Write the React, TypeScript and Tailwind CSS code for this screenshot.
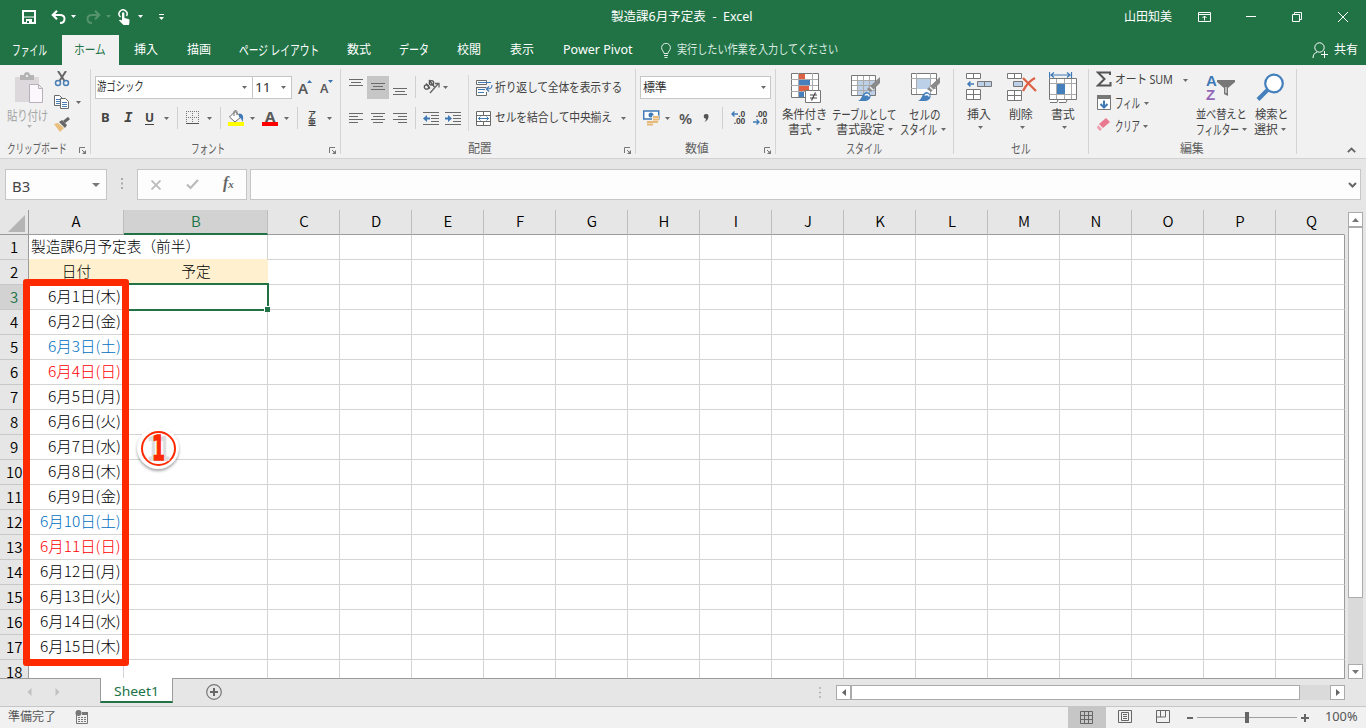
import React, { useLayoutEffect, useRef, useState } from "react";

interface FitProps {
  w: number;
  className?: string;
  children: React.ReactNode;
}

// Single line label squeezed to the narrow widths of the UI font
function Fit({ w, className = "", children }: FitProps) {
  const ref = useRef<HTMLSpanElement>(null);
  const [scale, setScale] = useState(1);

  useLayoutEffect(() => {
    if (ref.current) setScale(w / ref.current.offsetWidth);
  }, [w]);

  return (
    <span className={`block shrink-0 whitespace-nowrap ${className}`} style={{ width: w }}>
      <span ref={ref} className="inline-block origin-left" style={{ transform: `scaleX(${scale})` }}>
        {children}
      </span>
    </span>
  );
}

interface IconProps {
  w: number;
  h: number;
  className?: string;
  children: React.ReactNode;
}

function Icon({ w, h, className = "", children }: IconProps) {
  return (
    <svg width={w} height={h} viewBox={`0 0 ${w} ${h}`} fill="none" className={`block shrink-0 ${className}`}>
      {children}
    </svg>
  );
}

function Caret({ className = "text-[#6a6a6a]" }: { className?: string }) {
  return (
    <Icon w={5} h={3} className={className}>
      <path d="M0 0h5L2.5 3z" fill="currentColor" />
    </Icon>
  );
}

function Launcher({ className = "" }: { className?: string }) {
  return (
    <Icon w={8} h={8} className={className}>
      <path d="M.5 6V.5H6M3 3l3 3" stroke="#777" />
      <path d="M7 3v4H3z" fill="#777" />
    </Icon>
  );
}

function Lines({ rows, className = "" }: { rows: number[][]; className?: string }) {
  return (
    <Icon w={14} h={11} className={className}>
      {rows.map(([x, y, len]) => (
        <path key={y} d={`M${x} ${y + 0.5}h${len}`} stroke="#6a6a6a" />
      ))}
    </Icon>
  );
}

/* ---------- title bar + tabs ---------- */

function TitleBar() {
  return (
    <div className="flex h-[35px] items-center text-white text-[12px] pb-[2px]">
      <Icon w={14} h={14} className="ml-[22px]">
        <path d="M1 1h12v12H1z" stroke="#fff" strokeWidth="2" />
        <path d="M2 6.500h10v1H2zM4 9h6v4H4z" fill="#fff" />
        <path d="M5 11h2v2H5z" fill="#217346" />
      </Icon>
      <Icon w={15} h={14} className="ml-[15px]">
        <path d="M2 5h7c3 0 4.500 1.500 4.500 3.800S12 13 9 13" stroke="#fff" strokeWidth="2" />
        <path d="M6 .8L1.800 5 6 9.200" stroke="#fff" strokeWidth="2.200" />
      </Icon>
      <Caret className="ml-[5px] text-white" />
      <Icon w={15} h={14} className="ml-[10px]">
        <path d="M13 5H6C3 5 1.500 6.500 1.500 8.800S3 13 6 13" stroke="#55936f" strokeWidth="2" />
        <path d="M9 .8L13.200 5 9 9.200" stroke="#55936f" strokeWidth="2.200" />
      </Icon>
      <Caret className="ml-[5px] text-[#55936f]" />
      <Icon w={12} h={16} className="ml-[7px]">
        <path d="M2.500 8A4 4 0 1 1 8.500 7" stroke="#fff" strokeWidth="1.500" />
        <path d="M4 4.500a1.200 1.200 0 0 1 2.400 0V9l4 1c1 .3 1.300 1 1.100 2L11 16H5.500L1 11.500c.5-1 1.500-1 3 0z" fill="#fff" />
      </Icon>
      <Caret className="ml-[8px] text-white" />
      <Icon w={5} h={6} className="ml-[16px]">
        <path d="M0 .5h5" stroke="#fff" />
        <path d="M0 3h5L2.500 6z" fill="#fff" />
      </Icon>
      <Fit w={142} className="ml-[447px]"><span className="whitespace-pre">製造課6月予定表  -  Excel</span></Fit>
      <Fit w={48} className="ml-[371px]">山田知美</Fit>
      <Icon w={13} h={10} className="ml-[26px]">
        <path d="M.5.5h12v9H.5zM.5 2.500h12M6.500 8.500V4M4.500 6l2-2 2 2" stroke="#fff" />
      </Icon>
      <Icon w={10} h={2} className="ml-[35px]"><path d="M0 .5h10" stroke="#fff" /></Icon>
      <Icon w={10} h={10} className="ml-[36px]">
        <path d="M.5 2.500h7v7h-7zM2.500 2V.5h7v7H8" stroke="#fff" />
      </Icon>
      <Icon w={10} h={10} className="ml-[36px]"><path d="M0 0l10 10M10 0L0 10" stroke="#fff" /></Icon>
    </div>
  );
}

function TabBar() {
  return (
    <div className="flex h-[30px] items-center text-white text-[12px]">
      <Fit w={35} className="ml-[12px] text-[13.500px]">ファイル</Fit>
      <div className="ml-[15px] flex h-[30px] w-[57px] shrink-0 items-center bg-[#f1f1f1] pl-[12px] text-[#217346]">
        <Fit w={32} className="text-[13px]">ホーム</Fit>
      </div>
      <Fit w={24} className="ml-[15px]">挿入</Fit>
      <Fit w={24} className="ml-[29px]">描画</Fit>
      <Fit w={80} className="ml-[28px] text-[13.500px]">ページ レイアウト</Fit>
      <Fit w={24} className="ml-[28px]">数式</Fit>
      <Fit w={30} className="ml-[28px] text-[13px]">データ</Fit>
      <Fit w={24} className="ml-[28px]">校閲</Fit>
      <Fit w={24} className="ml-[29px]">表示</Fit>
      <Fit w={70} className="ml-[29px]">Power Pivot</Fit>
      <Icon w={10} h={15} className="ml-[28px]">
        <path d="M3 10.500c0-2-2.400-3-2.400-5.800a4.400 4.400 0 0 1 8.800 0c0 2.800-2.400 3.800-2.400 5.800zM3 12.500h4M3.500 14.500h3" stroke="#e3efe8" />
      </Icon>
      <Fit w={161} className="ml-[6px] text-[12.500px] text-[#dcebe2]">実行したい作業を入力してください</Fit>
      <Icon w={16} h={16} className="ml-[474px]">
        <circle cx="7.500" cy="5.500" r="4.700" stroke="#fff" />
        <path d="M1 16c0-3 1.500-5 4-6M9 12.500h7M12.500 9v7" stroke="#fff" />
      </Icon>
      <Fit w={24} className="ml-[6px]">共有</Fit>
    </div>
  );
}

/* ---------- ribbon ---------- */

function GroupLabel({ ml, w, children }: { ml: string; w: number; children: React.ReactNode }) {
  return <Fit w={w} className={`${ml} text-[#5f5f5f]`}>{children}</Fit>;
}

function ClipboardGroup() {
  return (
    <div className="flex h-[85px] w-[91px] shrink-0 flex-col border-r border-[#d4d4d4] [&>*]:shrink-0">
      <div className="flex h-[70px]">
        <div className="flex w-[50px] flex-col pl-[7px] text-[#a6a6a6]">
          <Icon w={30} h={32} className="mt-[3px] ml-[7px]">
            <path d="M1 5h24v25H1z" fill="#dcd8dc" />
            <path d="M6 3h4c0-4 6-4 6 0h4v5H6z" fill="#b4b4b4" />
            <path d="M12 3h2v2h-2z" fill="#eee" />
            <path d="M15.500 12.500h9l4 4v14h-13zM24.500 12.500v4h4" fill="#fbf7fc" stroke="#b7b0b9" />
          </Icon>
          <Fit w={41} className="mt-[2px] leading-[18px] text-[13px]">貼り付け</Fit>
          <Caret className="mt-[1px] ml-[20px] text-[#b5b5b5]" />
        </div>
        <div className="flex flex-col pl-[4px] pt-[2px]">
          <Icon w={16} h={16}>
            <path d="M4 0l6.500 10M12 0L5.500 10" stroke="#666" strokeWidth="2" />
            <circle cx="4" cy="12" r="2.500" stroke="#4a7fb5" strokeWidth="1.500" />
            <circle cx="12" cy="12" r="2.500" stroke="#4a7fb5" strokeWidth="1.500" />
          </Icon>
          <div className="mt-[8px] flex items-center">
            <Icon w={16} h={14}>
              <path d="M.5.5h5l3 3v7h-8z" fill="#fff" stroke="#6a6a6a" />
              <path d="M2 4.500h4M2 6.500h4M2 8.500h4" stroke="#4a7fb5" />
              <path d="M6.500 3.500h5l3 3v7h-8z" fill="#fff" stroke="#6a6a6a" />
              <path d="M8 7.500h5M8 9.500h5M8 11.500h5" stroke="#4a7fb5" />
            </Icon>
            <Caret className="ml-[6px] text-[#6a6a6a]" />
          </div>
          <Icon w={17} h={15} className="mt-[8px]">
            <path d="M0 7l4-1 6 5-4 4z" fill="#e9bd7c" />
            <path d="M5 5l3-2 5 5-2 3z" fill="#666" />
            <path d="M10 5l5-4" stroke="#666" strokeWidth="3" />
          </Icon>
        </div>
      </div>
      <div className="flex h-[20px] items-center">
        <GroupLabel ml="ml-[7px]" w={60}><span className="text-[13px]">クリップボード</span></GroupLabel>
        <Launcher className="ml-[12px] mt-[3px]" />
      </div>
    </div>
  );
}

function Sep() {
  return <div className="h-[22px] w-px shrink-0 bg-[#d0d0d0]" />;
}

function FontGroup() {
  return (
    <div className="flex h-[85px] w-[250px] shrink-0 flex-col border-r border-[#d4d4d4] [&>*]:shrink-0">
      <div className="mt-[7px] flex h-[24px] pl-[4px]">
        <div className="flex h-[23px] w-[158px] items-center border border-[#c6c6c6] bg-white pl-[1px] text-[#333]">
          <Fit w={47} className="text-[12.500px]">游ゴシック</Fit>
          <Caret className="ml-[98px] text-[#6a6a6a]" />
        </div>
        <div className="-ml-px flex h-[23px] w-[40px] items-center border border-[#c6c6c6] bg-white pl-[2px] text-[#333]">
          <Fit w={15} className="text-[13px]">11</Fit>
          <Caret className="ml-[11px] text-[#6a6a6a]" />
        </div>
        <div className="ml-[6px] flex pt-[3px]">
          <span className="w-[9px] text-[15px] font-semibold leading-[18px] text-[#5a5a5a]">A</span>
          <Icon w={5} h={3} className="mt-[1px]"><path d="M0 3h5L2.500 0z" fill="#3a74b0" /></Icon>
          <span className="ml-[8px] w-[8px] text-[12.500px] font-semibold leading-[20px] text-[#5a5a5a]">A</span>
          <Icon w={5} h={3} className="mt-[1px]"><path d="M0 0h5L2.500 3z" fill="#3a74b0" /></Icon>
        </div>
      </div>
      <div className="mt-[7px] flex h-[22px] items-center">
        <Fit w={8} className="ml-[10px] text-[13px] font-bold text-[#444]">B</Fit>
        <span className="ml-[15px] w-[8px] font-['Liberation_Mono',monospace] text-[14px] font-bold italic text-[#444]">I</span>
        <span className="ml-[13px] w-[9px] border-b border-[#444] text-[12px] font-bold leading-[12px] text-[#444]">U</span>
        <Caret className="ml-[10px] text-[#6a6a6a]" />
        <div className="ml-[8px]"><Sep /></div>
        <Icon w={14} h={14} className="ml-[8px]">
          <path d="M.5 0v13M6.500 0v13M12.500 0v13M0 .5h13M0 6.500h13" stroke="#777" strokeDasharray="1 1" />
          <path d="M0 12.500h13" stroke="#555" />
        </Icon>
        <Caret className="ml-[7px] text-[#6a6a6a]" />
        <div className="ml-[8px]"><Sep /></div>
        <Icon w={17} h={16} className="ml-[7px]">
          <path d="M7 1.500l6 5.500-6 5-5.500-5z" fill="#fff" stroke="#6a6a6a" />
          <path d="M6 6V2c0-2 3-2 3 0v3" stroke="#6a6a6a" />
          <path d="M11 3.500c4 0 5 3 3.500 8.500-1-2-1-4-3.500-5z" fill="#3f79b6" />
          <path d="M0 12h16v4H0z" fill="#ff0" />
        </Icon>
        <Caret className="ml-[5px] text-[#6a6a6a]" />
        <div className="ml-[7px] flex w-[16px] flex-col items-center">
          <span className="h-[12px] text-[15px] font-bold leading-[13px] text-[#5a5a5a]">A</span>
          <div className="h-[4px] w-[16px] bg-[#f00]" />
        </div>
        <Caret className="ml-[6px] text-[#6a6a6a]" />
        <div className="ml-[8px]"><Sep /></div>
        <div className="ml-[10px] flex w-[9px] flex-col text-[8px] font-bold leading-[8px] text-[#444]">
          <span>ア</span>
          <span>亜</span>
        </div>
        <Caret className="ml-[10px] text-[#6a6a6a]" />
      </div>
      <div className="mt-[10px] flex h-[20px] items-center">
        <GroupLabel ml="ml-[100px]" w={34}><span className="text-[13px]">フォント</span></GroupLabel>
        <Launcher className="ml-[104px] mt-[3px]" />
      </div>
    </div>
  );
}

function AlignGroup() {
  return (
    <div className="flex h-[85px] w-[295px] shrink-0 flex-col border-r border-[#d4d4d4] [&>*]:shrink-0">
      <div className="flex h-[70px]">
        <div className="flex w-[127px] flex-col">
          <div className="mt-[7px] flex h-[23px] pl-[8px]">
            <Lines rows={[[0, 0, 14], [2, 3, 10], [0, 6, 14]]} className="mt-[3px]" />
            <div className="ml-[4px] h-[23px] w-[22px] bg-[#c6c6c6] pl-[4px] pt-[7px]">
              <Lines rows={[[0, 0, 14], [2, 3, 10], [0, 6, 14]]} />
            </div>
            <Lines rows={[[0, 0, 14], [2, 3, 10], [0, 6, 14]]} className="ml-[4px] mt-[12px]" />
            <div className="ml-[8px]"><Sep /></div>
            <Icon w={17} h={15} className="ml-[7px] mt-[3px]">
              <circle cx="3.500" cy="8" r="2.200" stroke="#555" strokeWidth="1.300" />
              <path d="M3 4.500l4 5M6 1l5.500 7" stroke="#555" strokeWidth="1.300" />
              <circle cx="8.500" cy="3.800" r="2.200" stroke="#555" strokeWidth="1.300" />
              <path d="M7 14l8-9M12 4.500h4v4" stroke="#666" strokeWidth="1.300" />
            </Icon>
            <Caret className="ml-[3px] mt-[10px] text-[#6a6a6a]" />
          </div>
          <div className="mt-[8px] flex h-[22px] items-center pl-[8px]">
            <Lines rows={[[0, 0, 14], [0, 3, 9], [0, 6, 14], [0, 9, 9]]} />
            <Lines rows={[[0, 0, 14], [2, 3, 10], [0, 6, 14], [2, 9, 10]]} className="ml-[8px]" />
            <Lines rows={[[0, 0, 14], [5, 3, 9], [0, 6, 14], [5, 9, 9]]} className="ml-[8px]" />
            <div className="ml-[8px]"><Sep /></div>
            <Icon w={16} h={13} className="ml-[7px]">
              <path d="M0 .5h16M8 3.500h8M8 6.500h8M8 9.500h8M0 12.500h16" stroke="#6a6a6a" />
              <path d="M0 6.500L4 3v2.500h3v2H4V10z" fill="#3f79b6" />
            </Icon>
            <Icon w={16} h={13} className="ml-[6px]">
              <path d="M0 .5h16M8 3.500h8M8 6.500h8M8 9.500h8M0 12.500h16" stroke="#6a6a6a" />
              <path d="M7 6.500L3 3v2.500H0v2h3V10z" fill="#3f79b6" />
            </Icon>
          </div>
        </div>
        <div className="mt-[6px] h-[56px] w-px bg-[#d8d8d8]" />
        <div className="flex flex-col pl-[7px] text-[#444]">
          <div className="mt-[7px] flex h-[24px] items-center">
            <Icon w={17} h={17}>
              <path d="M.5.5h10v4H.5zM.5 9V7.500h10M.5 7v8.500h10V12" fill="#fff" stroke="#6a6a6a" />
              <path d="M2 2.500h13M2 9.500h7M2 12.500h6M16 5c0 3-1 4-5 4M13 6.500L10.500 9l2.500 2.500" stroke="#3f79b6" strokeWidth="1.200" />
            </Icon>
            <Fit w={127} className="ml-[2px] text-[12.500px]">折り返して全体を表示する</Fit>
          </div>
          <div className="mt-[7px] flex h-[23px] items-center">
            <Icon w={16} h={16}>
              <path d="M.5.500h14v14H.5zM.5 4.500h14M.5 10.500h14M7.500 0v4M7.500 11v4" fill="#fff" stroke="#6a6a6a" />
              <path d="M2 7.500h11M4.500 5.500l-2 2 2 2M10.500 5.500l2 2-2 2" stroke="#3f79b6" />
            </Icon>
            <Fit w={117} className="ml-[3px] text-[12.500px]">セルを結合して中央揃え</Fit>
            <Caret className="ml-[9px] text-[#6a6a6a]" />
          </div>
        </div>
      </div>
      <div className="flex h-[20px] items-center">
        <GroupLabel ml="ml-[127px]" w={24}>配置</GroupLabel>
        <Launcher className="ml-[132px] mt-[3px]" />
      </div>
    </div>
  );
}

function NumberGroup() {
  return (
    <div className="flex h-[85px] w-[140px] shrink-0 flex-col border-r border-[#d4d4d4] [&>*]:shrink-0">
      <div className="mt-[7px] ml-[4px] flex h-[23px] w-[131px] items-center border border-[#c6c6c6] bg-white pl-[2px] text-[#333]">
        <Fit w={24}>標準</Fit>
        <Caret className="ml-[94px] text-[#6a6a6a]" />
      </div>
      <div className="mt-[8px] flex h-[22px] items-center pl-[7px] text-[#555]">
        <Icon w={17} h={16}>
          <path d="M.7 1h15v8h-15z" fill="#fff" stroke="#3f79b6" strokeWidth="1.500" />
          <circle cx="8" cy="5" r="2.500" fill="#3f79b6" />
          <path d="M9 5.500h7v5H9zM4 10.500h6v5H4z" fill="#f1f1f1" />
          <path d="M10 7h6M10 9.500h6M9 12h6M4 12h6M4 14.500h6" stroke="#e6ba78" strokeWidth="1.800" />
        </Icon>
        <Caret className="ml-[5px] text-[#6a6a6a]" />
        <Fit w={13} className="ml-[9px] text-[15px] font-semibold">%</Fit>
        <Icon w={6} h={8} className="ml-[11px]">
          <path d="M3 0a2.300 2.300 0 0 1 2.500 2.500C5.500 5 4 7 1.500 8 2.500 6.500 3 5.500 3 4.700A2.300 2.300 0 0 1 3 0z" fill="#555" />
        </Icon>
        <div className="ml-[13px]"><Sep /></div>
        <div className="ml-[7px] flex w-[15px] flex-col items-end font-['Liberation_Sans',sans-serif] text-[8.500px] font-bold leading-[7.500px] text-[#444]">
          <span className="flex items-center">
            <Icon w={7} h={6}><path d="M7 3H1M3.500.5L1 3l2.500 2.500" stroke="#3f79b6" strokeWidth="1.400" /></Icon>.0
          </span>
          <span>.00</span>
        </div>
        <div className="ml-[7px] flex w-[15px] flex-col items-end font-['Liberation_Sans',sans-serif] text-[8.500px] font-bold leading-[7.500px] text-[#444]">
          <span>.00</span>
          <span className="flex items-center">
            <Icon w={7} h={6}><path d="M0 3h6M3.500.5L6 3 3.500 5.500" stroke="#3f79b6" strokeWidth="1.400" /></Icon>.0
          </span>
        </div>
      </div>
      <div className="mt-[10px] flex h-[20px] items-center">
        <GroupLabel ml="ml-[49px]" w={24}>数値</GroupLabel>
        <Launcher className="ml-[55px] mt-[3px]" />
      </div>
    </div>
  );
}

function StyleBrush() {
  return (
    <>
      <path d="M29 4v6l-9 9-4-3z" fill="#8a8a8a" />
      <path d="M19 14l3 3" stroke="#f1f1f1" strokeWidth="1.500" />
      <path d="M7 28c4-1 4-9 9-9 5 1 5 8-1 9z" fill="#4580bd" />
      <path d="M14 22.500c1-2 4-1 4 1" stroke="#fff" strokeWidth="1.500" />
    </>
  );
}

function StylesGroup() {
  return (
    <div className="flex h-[85px] w-[178px] shrink-0 flex-col border-r border-[#d4d4d4] [&>*]:shrink-0">
      <div className="flex h-[70px] text-[#444] leading-[15px]">
        <div className="w-[56px] shrink-0 pl-[6px] pt-[4px]">
          <Icon w={30} h={31} className="ml-[9px]">
            <path d="M.5.5h27v24H.5z" fill="#fff" stroke="#777" />
            <path d="M7.500 0v24M21.500 0v24M0 6.500h27M0 12.500h27M0 18.500h27" stroke="#aaa" />
            <path d="M8 1h6v5H8zM8 13h10v5H8z" fill="#dd6245" />
            <path d="M8 7h11v5H8zM8 19h5v5H8z" fill="#4580bd" />
            <path d="M14.500 17.500h15v12h-15z" fill="#fff" stroke="#777" />
            <path d="M19 22h7M19 25h7M24.500 19.500l-4 8" stroke="#444" strokeWidth="1.200" />
          </Icon>
          <Fit w={45} className="mt-[3px]">条件付き</Fit>
          <div className="flex items-center">
            <Fit w={24} className="ml-[6px]">書式</Fit>
            <Caret className="ml-[4px] text-[#6a6a6a]" />
          </div>
        </div>
        <div className="w-[68px] shrink-0 pt-[4px]">
          <Icon w={30} h={31} className="ml-[19px]">
            <path d="M.5 2.500h24v20H.5z" fill="#fff" stroke="#777" />
            <path d="M7 8h17v14H7z" fill="#bcd0e8" />
            <path d="M6.500 3v19M12.500 3v19M18.500 3v19M1 7.500h23M1 12.500h23M1 17.500h23" stroke="#aaa" />
            <StyleBrush />
          </Icon>
          <Fit w={64} className="mt-[3px] text-[13px]">テーブルとして</Fit>
          <div className="flex items-center">
            <Fit w={48} className="ml-[4px]">書式設定</Fit>
            <Caret className="ml-[4px] text-[#6a6a6a]" />
          </div>
        </div>
        <div className="shrink-0 pt-[4px]">
          <Icon w={30} h={31} className="ml-[11px]">
            <path d="M.5.5h25v21H.5z" fill="#fff" stroke="#777" />
            <path d="M5.500 0v21M19.500 0v21M0 5.500h25M0 15.500h25" stroke="#aaa" />
            <path d="M6 6h13v10H6z" fill="#bcd0e8" />
            <StyleBrush />
          </Icon>
          <Fit w={31} className="ml-[9px] mt-[3px] text-[13px]">セルの</Fit>
          <div className="flex items-center">
            <Fit w={37} className="text-[13px]">スタイル</Fit>
            <Caret className="ml-[4px] text-[#6a6a6a]" />
          </div>
        </div>
      </div>
      <div className="flex h-[20px] items-center">
        <GroupLabel ml="ml-[70px]" w={36}><span className="text-[13px]">スタイル</span></GroupLabel>
      </div>
    </div>
  );
}

function CellsGroup() {
  return (
    <div className="flex h-[85px] w-[135px] shrink-0 flex-col border-r border-[#d4d4d4] [&>*]:shrink-0">
      <div className="flex h-[70px] pt-[3px] text-[#444] leading-[15px]">
        <div className="flex w-[24px] shrink-0 flex-col ml-[13px]">
          <Icon w={27} h={31} className="-ml-px">
            <path d="M.5 1.500h14v5H.5zM7.500 1.500v5M.5 17.500h14v10H.5zM7.500 17v10M.5 22.500h14" fill="#fff" stroke="#777" />
            <path d="M11.500 9.500h14v5h-14zM18.500 9.500v5" fill="#bcd0e8" stroke="#777" />
            <path d="M8 12H2M4.500 9.500L2 12l2.500 2.500" stroke="#3f79b6" strokeWidth="1.500" />
          </Icon>
          <Fit w={24} className="mt-[4px]">挿入</Fit>
          <Caret className="mt-[4px] ml-[11px] text-[#6a6a6a]" />
        </div>
        <div className="flex w-[24px] shrink-0 flex-col ml-[18px]">
          <Icon w={30} h={31} className="-ml-[2px]">
            <path d="M.5 1.500h14v5H.5zM7.500 1.500v5M.5 18.500h14v10H.5zM7.500 18v10M.5 23.500h14" fill="#fff" stroke="#777" />
            <path d="M6.500 9.500h9v5h-9z" fill="#bcd0e8" stroke="#777" />
            <path d="M16 6l13 13M28 6c-6 3-9 7-12 13" stroke="#dd6245" strokeWidth="2.300" />
          </Icon>
          <Fit w={24} className="mt-[4px]">削除</Fit>
          <Caret className="mt-[4px] ml-[11px] text-[#6a6a6a]" />
        </div>
        <div className="flex w-[24px] shrink-0 flex-col ml-[18px]">
          <Icon w={29} h={32} className="-ml-[2px]">
            <path d="M.5 0v6M22.500 0v6M2 3h19M5 .5L2 3l3 2.500M18 .5L21 3l-3 2.500" stroke="#3f79b6" strokeWidth="1.200" />
            <path d="M.5 6.500h27v21H.5z" fill="#fff" stroke="#777" />
            <path d="M7.500 7v20M15.500 7v20M22.500 7v20M1 11.500h26M1 22.500h26" stroke="#aaa" />
            <path d="M8 12h8v10H8z" fill="#4580bd" />
            <path d="M1 27.500h8l-1 3H1M10 27.500h8l-1 3h-7" fill="#fff" stroke="#777" />
          </Icon>
          <Fit w={24} className="mt-[3px]">書式</Fit>
          <Caret className="mt-[4px] ml-[11px] text-[#6a6a6a]" />
        </div>
      </div>
      <div className="flex h-[20px] items-center">
        <GroupLabel ml="ml-[57px]" w={20}><span className="text-[13px]">セル</span></GroupLabel>
      </div>
    </div>
  );
}

function EditGroup() {
  return (
    <div className="flex h-[85px] w-[208px] shrink-0 flex-col border-r border-[#d4d4d4] [&>*]:shrink-0">
      <div className="flex h-[70px] text-[#444]">
        <div className="w-[107px] shrink-0 pl-[7px]">
          <div className="flex h-[22px] items-center">
            <Icon w={16} h={16} className="-mt-[3px]">
              <path d="M14 4V1.500H2L8.500 8 2 14.500h12.500V11" stroke="#555" strokeWidth="2" />
            </Icon>
            <Fit w={58} className="ml-[3px] text-[12.500px]">オート SUM</Fit>
            <Caret className="ml-[10px] text-[#6a6a6a]" />
          </div>
          <div className="mt-[1px] flex h-[22px] items-center">
            <Icon w={15} h={16} className="ml-px -mt-px">
              <path d="M.5.5h13v14H.5z" fill="#fff" stroke="#777" />
              <path d="M0 0h14v4H0z" fill="#777" />
              <path d="M7 5.500v7M3.500 9L7 12.500 10.500 9" stroke="#3f79b6" strokeWidth="2" />
            </Icon>
            <Fit w={25} className="ml-[3px] text-[13.500px]">フィル</Fit>
            <Caret className="ml-[4px] text-[#6a6a6a]" />
          </div>
          <div className="mt-[2px] flex h-[20px] items-center">
            <Icon w={14} h={13} className="ml-px -mt-[3px]">
              <path d="M9 0l4 4-7 6-4-4z" fill="#e8798f" />
              <path d="M1 7l4 4-2 2-3-3z" fill="#ef9fae" />
            </Icon>
            <Fit w={25} className="ml-[4px] text-[13.500px]">クリア</Fit>
            <Caret className="ml-[3px] text-[#6a6a6a]" />
          </div>
        </div>
        <div className="w-[58px] shrink-0 pt-[5px] leading-[15px]">
          <div className="flex h-[29px] pl-[10px]">
            <div className="w-[11px] font-['Liberation_Sans',sans-serif] text-[15px] font-bold leading-[13.500px]">
              <div className="text-[#3f79b6]">A</div>
              <div className="text-[#9466b8]">Z</div>
            </div>
            <Icon w={18} h={17} className="mt-[6px]">
              <path d="M0 0h18v2l-7 6v8l-4-2V8L0 2z" fill="#777" />
              <path d="M9 7v6" stroke="#fff" />
            </Icon>
          </div>
          <Fit w={51} className="mt-[4px] text-[12.500px]">並べ替えと</Fit>
          <div className="flex items-center">
            <Fit w={43} className="text-[13px]">フィルター</Fit>
            <Caret className="ml-[3px] text-[#6a6a6a]" />
          </div>
        </div>
        <div className="shrink-0 pt-[4px] leading-[15px]">
          <Icon w={30} h={31} className="ml-[2px]">
            <circle cx="18" cy="10.500" r="8.800" fill="#fff" stroke="#4580bd" strokeWidth="2.200" />
            <path d="M11.500 17L2 26.500" stroke="#4580bd" strokeWidth="4" />
          </Icon>
          <Fit w={33} className="ml-[1px] mt-[3px]">検索と</Fit>
          <div className="flex items-center">
            <Fit w={24}>選択</Fit>
            <Caret className="ml-[3px] text-[#6a6a6a]" />
          </div>
        </div>
      </div>
      <div className="flex h-[20px] items-center">
        <GroupLabel ml="ml-[91px]" w={24}>編集</GroupLabel>
      </div>
    </div>
  );
}

function Ribbon() {
  return (
    <div className="flex h-[94px] border-b border-[#d2d2d2] bg-[#f1f1f1] pt-[4px] text-[12px] -tracking-[0.2px]">
      <ClipboardGroup />
      <FontGroup />
      <AlignGroup />
      <NumberGroup />
      <StylesGroup />
      <CellsGroup />
      <EditGroup />
      <Icon w={9} h={6} className="ml-[50px] mt-[78px]">
        <path d="M.8 5.200l3.700-3.700 3.700 3.700" stroke="#666" strokeWidth="1.800" />
      </Icon>
    </div>
  );
}

function FormulaBar() {
  return (
    <div className="flex h-[51px] pt-[10px] pl-[5px]">
      <div className="flex h-[31px] w-[102px] items-center border border-[#c6c6c6] bg-[#fdfdfd] pl-[6px] text-[14px] text-[#444]">
        <Fit w={18} className="mt-[3px]">B3</Fit>
        <Icon w={8} h={4} className="ml-[62px]"><path d="M0 0h8L4 4z" fill="#777" /></Icon>
      </div>
      <Icon w={2} h={12} className="ml-[14px] mt-[9px]">
        <path d="M0 1h2M0 5.500h2M0 10h2" stroke="#aaa" strokeWidth="2" />
      </Icon>
      <div className="ml-[14px] flex h-[31px] w-[110px] items-center border border-[#c6c6c6] bg-[#fdfdfd] pl-[13px]">
        <Icon w={10} h={10}><path d="M.5.5l9 9M9.500.5l-9 9" stroke="#bbb" strokeWidth="1.800" /></Icon>
        <Icon w={13} h={11} className="ml-[25px]"><path d="M1 5.500L4.500 9 12 1" stroke="#bbb" strokeWidth="2.200" /></Icon>
        <span className="ml-[24px] -mt-[2px] font-['Liberation_Serif',serif] text-[16px] font-bold italic leading-[16px] text-[#666]">
          f<span className="text-[11px]">x</span>
        </span>
      </div>
      <div className="ml-[3px] flex h-[31px] w-[1111px] items-center justify-end border border-[#c6c6c6] bg-[#fdfdfd] pr-[3px]">
        <Icon w={9} h={6}><path d="M1 1l3.500 3.500L8 1" stroke="#666" strokeWidth="2" /></Icon>
      </div>
    </div>
  );
}

/* ---------- sheet ---------- */

const restColumns = ["C", "D", "E", "F", "G", "H", "I", "J", "K", "L", "M", "N", "O", "P", "Q"];

const dates = [
  { text: "6月1日(木)", w: 73, color: "text-black" },
  { text: "6月2日(金)", w: 73, color: "text-black" },
  { text: "6月3日(土)", w: 73, color: "text-[#0070c0]" },
  { text: "6月4日(日)", w: 73, color: "text-[#f00]" },
  { text: "6月5日(月)", w: 73, color: "text-black" },
  { text: "6月6日(火)", w: 73, color: "text-black" },
  { text: "6月7日(水)", w: 73, color: "text-black" },
  { text: "6月8日(木)", w: 73, color: "text-black" },
  { text: "6月9日(金)", w: 73, color: "text-black" },
  { text: "6月10日(土)", w: 81, color: "text-[#0070c0]" },
  { text: "6月11日(日)", w: 81, color: "text-[#f00]" },
  { text: "6月12日(月)", w: 81, color: "text-black" },
  { text: "6月13日(火)", w: 81, color: "text-black" },
  { text: "6月14日(水)", w: 81, color: "text-black" },
  { text: "6月15日(木)", w: 81, color: "text-black" },
];

function RowHead({ n }: { n: number }) {
  const active = n === 3;
  return (
    <div
      className={`flex w-[29px] shrink-0 items-center justify-center border-r border-b border-r-[#9b9b9b] border-b-[#c8c8c8] pb-[2px] text-[15px] leading-[15px] font-[350] ${
        active ? "bg-[#d2d2d2] text-[#217346]" : "text-black"
      }`}
    >
      <Fit w={n > 9 ? 16 : 8}>{n}</Fit>
    </div>
  );
}

function RestCells() {
  return (
    <>
      {restColumns.map(c => (
        <div key={c} className={`shrink-0 border-r border-b border-[#d4d4d4] ${c === "Q" ? "w-[69px] border-r-[#9b9b9b]" : "w-[72px]"}`} />
      ))}
    </>
  );
}

function Sheet() {
  return (
    <div className="h-[469px] w-[1345px] shrink-0 overflow-hidden border-b border-[#9b9b9b]">
      <div className="flex h-[25px] text-[15px] font-[350] text-black">
        <div className="flex w-[29px] shrink-0 items-end justify-end border-b border-r border-[#9b9b9b] pr-[3px] pb-[2px]">
          <Icon w={17} h={17}><path d="M17 0v17H0z" fill="#b4b4b4" /></Icon>
        </div>
        <div className="flex w-[95px] shrink-0 items-center justify-center border-b border-r border-[#9b9b9b] border-r-[#bdbdbd] pb-[2px]">A</div>
        <div className="flex w-[144px] shrink-0 items-center justify-center border-b-2 border-r border-b-[#217346] border-r-[#bdbdbd] bg-[#d2d2d2] pb-px pl-px text-[#217346]">B</div>
        {restColumns.map(c => (
          <div key={c} className={`flex shrink-0 items-center justify-center border-b border-r border-[#9b9b9b] pb-[2px] ${c === "Q" ? "w-[69px] border-r-transparent pl-[3px]" : "w-[72px] border-r-[#bdbdbd] pl-px"}`}>
            {c}
          </div>
        ))}
      </div>

      <div className="flex h-[25px]">
        <RowHead n={1} />
        <div className="flex w-[239px] shrink-0 items-center border-b border-r border-b-[#fff0cf] border-r-[#d4d4d4] bg-white pb-[2px] pl-[2px] text-[14.667px] font-light text-black">
          製造課6月予定表（前半）
        </div>
        <div className="flex bg-white"><RestCells /></div>
      </div>

      <div className="flex h-[25px]">
        <RowHead n={2} />
        <div className="flex w-[95px] shrink-0 items-center justify-center border-b border-b-[#d4d4d4] bg-[#fff0cf] pb-[2px] text-[14.667px] font-light text-black">日付</div>
        <div className="flex w-[144px] shrink-0 items-center justify-center border-b border-b-[#d4d4d4] bg-[#fff0cf] pb-[2px] text-[14.667px] font-light text-black">予定</div>
        <div className="flex bg-white"><RestCells /></div>
      </div>

      {dates.map((d, i) => (
        <div key={d.text} className="flex h-[25px]">
          <RowHead n={i + 3} />
          <div className={`flex w-[95px] shrink-0 items-center justify-end border-r border-b border-[#d4d4d4] bg-white pb-[2px] pr-[2px] text-[14.667px] font-light ${d.color}`}>
            <Fit w={d.w}>{d.text}</Fit>
          </div>
          <div className="w-[144px] shrink-0 border-r border-b border-[#d4d4d4] bg-white" />
          <div className="flex bg-white"><RestCells /></div>
        </div>
      ))}

      <div className="flex h-[25px]">
        <RowHead n={18} />
        <div className="w-[95px] shrink-0 border-r border-[#d4d4d4] bg-white" />
        <div className="w-[144px] shrink-0 border-r border-[#d4d4d4] bg-white" />
        <div className="flex bg-white"><RestCells /></div>
      </div>
    </div>
  );
}

function VerticalScroll() {
  return (
    <div className="ml-[3px] mt-[2px] flex h-[467px] w-[15px] flex-col bg-[#dadada]">
      <div className="flex h-[15px] items-center justify-center border border-[#ababab] bg-white">
        <Icon w={7} h={4}><path d="M0 4h7L3.500 0z" fill="#777" /></Icon>
      </div>
      <div className="h-[371px] border border-[#ababab] bg-white" />
      <div className="mt-auto flex h-[15px] items-center justify-center border border-[#ababab] bg-white">
        <Icon w={7} h={4}><path d="M0 0h7L3.500 4z" fill="#777" /></Icon>
      </div>
    </div>
  );
}

function SheetTabs() {
  return (
    <div className="flex h-[28px] border-b border-[#c6c6c6]">
      <Icon w={5} h={8} className="ml-[27px] mt-[9px]"><path d="M4.500 0v8L.5 4z" fill="#c0c0c0" /></Icon>
      <Icon w={5} h={8} className="ml-[23px] mt-[9px]"><path d="M.5 0v8l4-4z" fill="#c0c0c0" /></Icon>
      <div className="-mt-px ml-[40px] flex h-[25px] w-[73px] items-center justify-center border-x border-b-2 border-x-[#9b9b9b] border-b-[#217346] bg-white text-[13px] text-[#217346]">
        <Fit w={45} className="mt-[4px]">Sheet1</Fit>
      </div>
      <Icon w={16} h={16} className="ml-[33px] mt-[5px]">
        <circle cx="8" cy="8" r="7.300" stroke="#777" strokeWidth="1.200" />
        <path d="M4 8h8M8 4v8" stroke="#666" strokeWidth="2" />
      </Icon>
      <Icon w={2} h={12} className="ml-[597px] mt-[8px]">
        <path d="M0 1h2M0 5.500h2M0 10h2" stroke="#b0b0b0" strokeWidth="1.500" />
      </Icon>
      <div className="ml-[15px] mt-[6px] flex h-[15px] w-[509px] bg-[#dadada]">
        <div className="flex w-[15px] items-center justify-center border border-[#ababab] bg-white">
          <Icon w={4} h={7}><path d="M4 0v7L0 3.500z" fill="#666" /></Icon>
        </div>
        <div className="w-[449px] border border-[#ababab] bg-white" />
        <div className="ml-auto flex w-[15px] items-center justify-center border border-[#ababab] bg-white">
          <Icon w={4} h={7}><path d="M0 0v7l4-3.500z" fill="#666" /></Icon>
        </div>
      </div>
    </div>
  );
}

function StatusBar() {
  return (
    <div className="flex h-[21px] items-center bg-[#f1f1f1] text-[12px] text-[#555]">
      <Fit w={48} className="ml-[8px] -mt-[2px]">準備完了</Fit>
      <Icon w={14} h={14} className="ml-[19px] -mt-px">
        <path d="M1.500 5v8.500h11v-10H7" stroke="#777" />
        <path d="M7 2h6v3H7z" fill="#777" />
        <path d="M3 7.500h9M3 9.500h9M3 11.500h9" stroke="#777" strokeDasharray="2 1" />
        <circle cx="3.500" cy="3" r="3" fill="#777" />
      </Icon>
      <div className="ml-[979px] flex h-[21px] w-[38px] items-center justify-center bg-[#c6c6c6]">
        <Icon w={13} h={13} className="-mt-px -ml-px"><path d="M.5.5h12v12H.5zM4.500 0v13M8.500 0v13M0 4.500h13M0 8.500h13" stroke="#666" /></Icon>
      </div>
      <Icon w={14} h={13} className="ml-[12px] -mt-[2px]">
        <path d="M.5.5h13v12H.5zM3.500 2.500h7v8h-7zM5 4.500h4M5 6.500h4M5 8.500h4" stroke="#666" />
      </Icon>
      <Icon w={14} h={13} className="ml-[24px] -mt-[2px]">
        <path d="M.5.5h13v12H.5zM4.500 0v7M9.500 0v7H0" stroke="#666" />
      </Icon>
      <div className="ml-[17px] h-[2px] w-[6px] bg-[#666]" />
      <div className="ml-[4px] flex h-[11px] w-[100px] items-center">
        <div className="h-px w-[48px] bg-[#a0a0a0]" />
        <div className="h-[11px] w-[4px] bg-[#666]" />
        <div className="h-px w-[48px] bg-[#a0a0a0]" />
      </div>
      <Icon w={8} h={8} className="ml-[4px]"><path d="M0 4h8M4 0v8" stroke="#666" strokeWidth="2" /></Icon>
      <Fit w={33} className="ml-[16px] -mt-px">100%</Fit>
    </div>
  );
}

export default function App() {
  return (
    <div className="relative h-[728px] w-[1366px] overflow-hidden bg-[#e6e6e6] font-['Noto_Sans','Noto_Sans_CJK_JP',sans-serif]">
      <div className="bg-[#217346]">
        <TitleBar />
        <TabBar />
      </div>
      <Ribbon />
      <FormulaBar />
      <div className="flex font-['Noto_Sans_CJK_JP',sans-serif]">
        <Sheet />
        <VerticalScroll />
      </div>
      <SheetTabs />
      <StatusBar />

      {/* B3 selection frame */}
      <div className="absolute left-[122px] top-[283px] h-[28px] w-[147px] border-2 border-[#217346]" />
      <div className="absolute left-[264px] top-[306px] h-[6px] w-[6px] border-l border-t border-white bg-[#217346]" />

      {/* callout around the date column */}
      <div className="absolute left-[23px] top-[279px] h-[387px] w-[106px] rounded-[3px] border-[7px] border-[#ff2a00]" />
      <div className="absolute left-[137px] top-[427px] flex h-[42px] w-[42px] items-center justify-center rounded-full bg-white shadow-[0_2px_3px_rgba(0,0,0,0.35)]">
        <div className="flex h-[35px] w-[35px] items-center justify-center rounded-full border-2 border-[#ff2a00]">
          <span className="scale-x-[0.56] font-['DejaVu_Sans',sans-serif] text-[33px] font-bold leading-[33px] text-[#ff2a00] [-webkit-text-stroke:1.500px_#ff2a00] [text-shadow:-10px_1px_1px_#ddd,10px_1px_1px_#ddd]">
            1
          </span>
        </div>
      </div>
    </div>
  );
}
